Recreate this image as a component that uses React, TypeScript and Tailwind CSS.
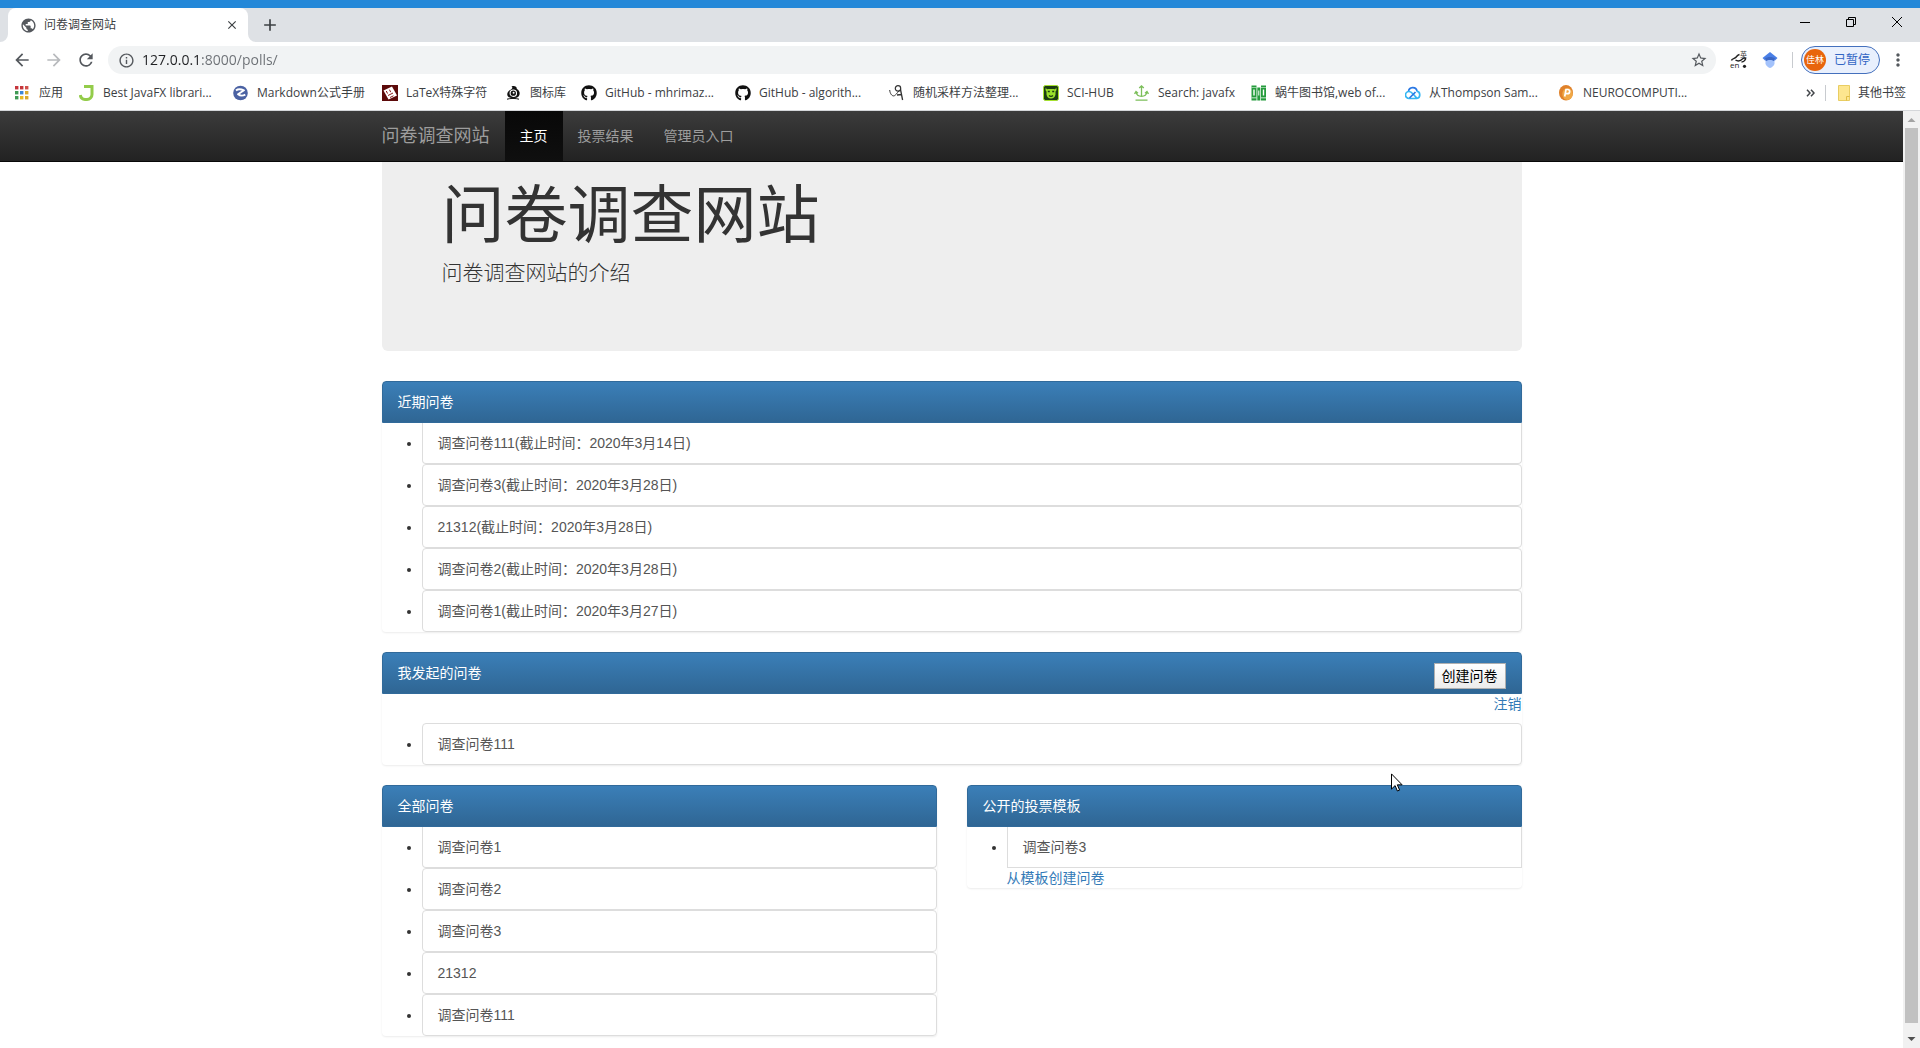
import type { ReactNode } from 'react';
import { FaGithub } from 'react-icons/fa';
import { MdArrowBack, MdArrowForward, MdRefresh, MdPublic, MdInfoOutline, MdStarBorder, MdMoreVert, MdClose, MdAdd } from 'react-icons/md';

type Bookmark = { label: string; width: string; icon: ReactNode };

const appColors = ['#c5353b', '#c5353b', '#d0504a', '#3f9a54', '#3b86d6', '#d9a92c', '#3f9a54', '#e8b923', '#d9a92c'];

const bookmarks: Bookmark[] = [
  {
    label: '应用',
    width: 'w-[64px]',
    icon: (
      <svg viewBox="0 0 16 16" className="size-4 shrink-0">
        {appColors.map((c, i) => (
          <rect key={i} x={(i % 3) * 5} y={1 + Math.floor(i / 3) * 5} width="3.4" height="3.4" fill={c} />
        ))}
      </svg>
    ),
  },
  {
    label: 'Best JavaFX librari...',
    width: 'w-[154px]',
    icon: (
      <svg viewBox="0 0 16 16" className="size-4 shrink-0">
        <path d="M5 1.500h8v8a5 5 0 0 1-5 5H6A5 5 0 0 1 1.300 10" fill="none" stroke="#93cc4a" strokeWidth="3" />
      </svg>
    ),
  },
  {
    label: 'Markdown公式手册',
    width: 'w-[149px]',
    icon: (
      <svg viewBox="0 0 16 16" className="size-4 shrink-0">
        <circle cx="7.500" cy="8" r="7.300" fill="#4b62a3" />
        <path d="M3 5.500c2-1.700 5.500-1.200 8-.2L5 9.300c2 1.500 4.200 2 7.300.3" fill="none" stroke="#fff" strokeWidth="1.900" strokeLinejoin="round" />
      </svg>
    ),
  },
  {
    label: 'LaTeX特殊字符',
    width: 'w-[124px]',
    icon: (
      <svg viewBox="0 0 16 16" className="size-4 shrink-0">
        <rect width="16" height="16" fill="#5c0a0a" />
        <path d="m1.500 5.500 8.500-4 5 9-8.500 4Z" fill="#fff" />
        <path d="m4.300 6 1.200 2.500M7.500 4.700l1.200 2.500M6 10.500l5-2.500m-3 4.500 3.500-1.700" stroke="#8d1919" />
      </svg>
    ),
  },
  {
    label: '图标库',
    width: 'w-[75px]',
    icon: (
      <svg viewBox="0 0 16 16" className="size-4 shrink-0">
        <path d="M5.500 1.500C8.500.500 11 1.500 10.800 4c3 1.500 3.500 4.500 2.200 7-2 2.700-8.500 3-11 .5C.3 9.500 1.500 6 5 4.500 6.500 3.500 7 2.500 5.500 1.500Z" fill="#111" />
        <path d="M1 14.200c3-1 9-1 12 0" stroke="#111" strokeWidth="1" fill="none" />
        <circle cx="7.300" cy="8.200" r="3.200" fill="none" stroke="#fff" strokeWidth="1.100" />
        <circle cx="7.600" cy="7.800" r="1" fill="#fff" />
      </svg>
    ),
  },
  { label: 'GitHub - mhrimaz...', width: 'w-[154px]', icon: <FaGithub size={16} className="shrink-0 text-[#111]" /> },
  { label: 'GitHub - algorith...', width: 'w-[154px]', icon: <FaGithub size={16} className="shrink-0 text-[#111]" /> },
  {
    label: '随机采样方法整理...',
    width: 'w-[154px]',
    icon: (
      <svg viewBox="0 0 16 16" className="size-4 shrink-0" fill="none" stroke="#333">
        <path d="M.7 5c.3 4.500 3.500 7.500 5.600 5C8 9 9 6 11.500 5" strokeWidth="1" />
        <circle cx="9" cy="3.400" r="2.700" strokeWidth="1.200" />
        <path d="M11.500 4.500 13.600 15M8 10l4.500-.5" strokeWidth="1.300" />
      </svg>
    ),
  },
  {
    label: 'SCI-HUB',
    width: 'w-[91px]',
    icon: (
      <svg viewBox="0 0 16 16" className="size-4 shrink-0">
        <rect x=".5" y=".5" width="15" height="15" rx="2" fill="#1d3d12" stroke="#a6e22e" />
        <path d="M3 2.500c0 1.500 1 2 2 1.500h6c1 .5 2 0 2-1.500 1 2 .5 3-.5 4v3c-.5 2.500-2 4-4.500 4s-4-1.500-4.500-4v-3c-1-1-1.500-2-.5-4Z" fill="#9be02a" />
        <path d="M4.800 6.500h2M9.200 6.500h2M6 10.500c1 .8 3 .8 4 0" stroke="#1d3d12" strokeWidth="1.300" fill="none" />
      </svg>
    ),
  },
  {
    label: 'Search: javafx',
    width: 'w-[117px]',
    icon: (
      <svg viewBox="0 0 16 16" className="size-4 shrink-0" fill="none" stroke="#7cbf5a" strokeWidth="1.300">
        <path d="M7.500.8v10.500M5.200 3 7.500.9 9.800 3M2 7c.5 3 2.500 4.300 5.500 4.300S12.500 10 13 7M.5 8.800 2 6.500l2 1.800M14.500 8.800 13 6.500l-2 1.800M1.500 15.200h12" />
      </svg>
    ),
  },
  {
    label: '蜗牛图书馆,web of...',
    width: 'w-[154px]',
    icon: (
      <svg viewBox="0 0 16 16" className="size-4 shrink-0">
        <path d="M.5.5h5v15h-5zM6.300 2.500h3v13h-3zM10 .5h5v15h-5z" fill="#259b3c" />
        <path d="M2.300 4.500h1.400v6H2.300zM7.300 5.500h1v5h-1zM11.800 4.500h1.400v6h-1.400zM.5 2.200h5v.6h-5zM.5 12.500h5v.8h-5zM10 2.200h5v.6h-5zM10 12.500h5v.8h-5z" fill="#fff" />
      </svg>
    ),
  },
  {
    label: '从Thompson Sam...',
    width: 'w-[154px]',
    icon: (
      <svg viewBox="0 0 16 16" className="size-4 shrink-0" fill="none" strokeWidth="1.700">
        <path d="M3.500 6.500A4.300 4.300 0 0 1 12 6" stroke="#2a78e4" />
        <path d="M11.500 6.200a3.700 3.700 0 0 1 .3 7.300H4a3.500 3.500 0 0 1 0-7c2.500 0 3.500 2 5 3.500s2 2.500 3 3.500" stroke="#35b6f2" />
        <path d="m4.500 13 6-6" stroke="#2a78e4" />
      </svg>
    ),
  },
  {
    label: 'NEUROCOMPUTI...',
    width: 'w-[154px]',
    icon: (
      <svg viewBox="0 0 16 16" className="size-4 shrink-0">
        <ellipse cx="7" cy="7.800" rx="7" ry="7.700" fill="#e0812a" />
        <ellipse cx="8.500" cy="9" rx="5.200" ry="6" fill="#f0a846" />
        <path d="M5.700 11.500 7 4.500h1.900c2.600 0 2.300 4.200-.5 4.200H6.700" fill="none" stroke="#fff" strokeWidth="1.700" />
      </svg>
    ),
  },
];

const recentPolls = [
  '调查问卷111(截止时间：2020年3月14日)',
  '调查问卷3(截止时间：2020年3月28日)',
  '21312(截止时间：2020年3月28日)',
  '调查问卷2(截止时间：2020年3月28日)',
  '调查问卷1(截止时间：2020年3月27日)',
];

const allPolls = ['调查问卷1', '调查问卷2', '调查问卷3', '21312', '调查问卷111'];

function TabStrip() {
  return (
    <div className="flex h-[34px] items-stretch bg-[#dee1e5] pl-2">
      <div className="relative flex w-60 items-center rounded-t-lg bg-white pr-2 pl-3">
        {/* Curved feet of the active tab */}
        <svg viewBox="0 0 8 8" className="absolute bottom-0 -left-2 size-2">
          <path d="M8 0v8H0a8 8 0 0 0 8-8Z" fill="#fff" />
        </svg>
        <svg viewBox="0 0 8 8" className="absolute -right-2 bottom-0 size-2">
          <path d="M0 0v8h8a8 8 0 0 1-8-8Z" fill="#fff" />
        </svg>
        <MdPublic size={17} className="text-[#54585d]" />
        <span className="ml-[7px] flex-1 text-xs text-[#3c4043]">问卷调查网站</span>
        <button aria-label="关闭标签页" className="flex size-4 items-center justify-center text-[#3c4043]">
          <MdClose size={14} />
        </button>
      </div>
      <button aria-label="新标签页" className="ml-3 flex w-5 items-center justify-center text-[#3c4043]">
        <MdAdd size={20} />
      </button>
      <div className="ml-auto flex h-7 items-center gap-9 pr-[18px]">
        <button aria-label="最小化">
          <svg viewBox="0 0 10 10" className="size-2.5" stroke="#000">
            <path d="M0 5.500h10" />
          </svg>
        </button>
        <button aria-label="还原">
          <svg viewBox="0 0 10 10" className="size-2.5" fill="none" stroke="#000">
            <path d="M.5 2.500h7v7h-7zM2.500 2.500v-2h7v7h-2" />
          </svg>
        </button>
        <button aria-label="关闭">
          <svg viewBox="0 0 10 10" className="size-2.5" stroke="#000">
            <path d="m0 0 10 10M10 0 0 10" />
          </svg>
        </button>
      </div>
    </div>
  );
}

function Toolbar() {
  return (
    <div className="flex h-9 items-center bg-white pr-3 pl-3">
      <div className="flex items-center gap-3 text-[#54585d]">
        <button aria-label="后退"><MdArrowBack size={20} /></button>
        <button aria-label="前进" className="text-[#b8babd]"><MdArrowForward size={20} /></button>
        <button aria-label="重新加载"><MdRefresh size={20} /></button>
      </div>
      <div className="ml-3 flex h-7 flex-1 items-center rounded-full bg-[#f1f3f4] pr-2 pl-2.5">
        <MdInfoOutline size={17} className="text-[#54585d]" />
        <input
          aria-label="地址"
          defaultValue="127.0.0.1:8000/polls/"
          className="ml-[7px] flex-1 bg-[linear-gradient(to_right,#202124_59px,#6b6f74_59px)] bg-clip-text text-sm text-transparent outline-none"
        />
        <button aria-label="收藏" className="text-[#54585d]"><MdStarBorder size={18} /></button>
      </div>
      <div className="ml-3.5 flex items-center gap-3.5">
        <button aria-label="翻译">
          <svg viewBox="0 0 18 18" className="size-[18px] overflow-visible" fill="none" stroke="#222">
            <path d="M1.500 9.500C2 7.500 4.500 8 6 6.300S7.500 4 9.500 3.500M5.500 9c3 2 5.500.500 7.500-1.500 1.500-1.200 3.500-.5 2 1.500-.8 1.500-2 2-3.500 2" strokeWidth="1.500" />
            <text x="0" y="17" fontSize="8" fill="#222" stroke="none">en</text>
            <text x="10" y="6" fontSize="7" fill="#444" stroke="none">英</text>
            <circle cx="14.500" cy="15.300" r="1.600" fill="#222" stroke="none" />
          </svg>
        </button>
        <button aria-label="学术搜索">
          <svg viewBox="0 0 16 18" className="h-[18px] w-4">
            <path d="m8 1 7.500 6L13 9.500H3L.5 7Z" fill="#4a7fe6" />
            <path d="M3.500 8.500C5 6.500 11 6.500 12.500 8.500v4.500c-1 2-2.500 3.500-4.500 4-2-.5-3.500-2-4.500-4Z" fill="#a3c2fb" />
            <path d="M3 7.500c2-2 8-2 10 0L12 10c-2-1.500-6-1.500-8 0Z" fill="#3b67c4" />
          </svg>
        </button>
      </div>
      <div className="ml-3.5 h-4 w-px bg-[#c8cbcf]" />
      <button className="ml-2 flex h-7 items-center rounded-full border border-[#4470bd] bg-[#e9f0fd] pr-[9px] pl-0.5">
        <span className="flex size-[22px] items-center justify-center rounded-full bg-[#e8650c] text-[9px] text-white">佳林</span>
        <span className="ml-2 text-xs text-[#3265c4]">已暂停</span>
      </button>
      <button aria-label="菜单" className="ml-2 text-[#54585d]"><MdMoreVert size={20} /></button>
    </div>
  );
}

function BookmarksBar() {
  return (
    <div className="flex h-[33px] items-center border-b border-[#d5d7da] bg-white pr-3.5 pb-0.5 pl-[15px] text-xs text-[#3c4043]">
      {bookmarks.map((b) => (
        <a key={b.label} href="#" className={`flex shrink-0 items-center gap-2 whitespace-nowrap ${b.width}`}>
          {b.icon}
          {b.label}
        </a>
      ))}
      <div className="ml-auto flex items-center">
        <button aria-label="更多书签">
          <svg viewBox="0 0 9 8" className="h-2 w-[9px]" fill="none" stroke="#44474b" strokeWidth="1.500">
            <path d="m1 .7 3 3.300-3 3.300M5 .7 8 4 5 7.300" />
          </svg>
        </button>
        <div className="ml-2.5 h-4 w-px bg-[#c8cbcf]" />
        <a href="#" className="ml-3 flex items-center gap-2 whitespace-nowrap">
          <svg viewBox="0 0 12 16" className="h-4 w-3">
            <path d="M.5.5h11v15H.5z" fill="#fde68f" stroke="#e9cd62" />
            <path d="M8.500 15.500v-4h3" fill="none" stroke="#e0bd45" />
          </svg>
          其他书签
        </a>
      </div>
    </div>
  );
}

function Navbar() {
  return (
    <nav className="border-b border-[#080808] bg-linear-to-b from-[#3c3c3c] to-[#222]">
      <div className="mx-auto flex h-[50px] w-full max-w-[1140px] items-stretch text-sm text-[#9d9d9d]">
        <a href="#" className="flex items-center pr-[15px] text-lg">问卷调查网站</a>
        <a href="#" className="flex items-center bg-linear-to-b from-[#080808] to-[#0f0f0f] px-[15px] text-white">主页</a>
        <a href="#" className="flex items-center px-[15px]">投票结果</a>
        <a href="#" className="flex items-center px-[15px]">管理员入口</a>
      </div>
    </nav>
  );
}

function Panel({ title, action, children }: { title: string; action?: ReactNode; children: ReactNode }) {
  return (
    <section className="mb-5 rounded bg-white shadow-[0_1px_2px_rgba(0,0,0,0.08)]">
      <div className="flex h-[42px] items-center justify-between rounded-t border border-[#316a9a] bg-linear-to-b from-[#3b7fb8] to-[#2f6694] px-[15px] text-white">
        <h3>{title}</h3>
        {action}
      </div>
      {children}
    </section>
  );
}

function PollList({ items }: { items: string[] }) {
  return (
    <ul className="list-disc pl-10">
      {items.map((item, i) => (
        <li key={item}>
          <a
            href="#"
            className={`block border border-[#ddd] px-[15px] py-2.5 text-[#555] ${i === 0 ? 'rounded-b border-t-0' : 'rounded'}`}
          >
            {item}
          </a>
        </li>
      ))}
    </ul>
  );
}

function Scrollbar() {
  return (
    <div className="flex w-[17px] shrink-0 flex-col items-center bg-[#f1f1f1]">
      <svg viewBox="0 0 17 17" className="size-[17px] shrink-0">
        <path d="m8.500 7 4 4h-8z" fill="#a3a3a3" />
      </svg>
      <div className="w-[13px] flex-1 bg-[#c1c1c1]" />
      <svg viewBox="0 0 17 25" className="h-[25px] w-[17px] shrink-0">
        <path d="m8.500 18 4-4h-8z" fill="#505050" />
      </svg>
    </div>
  );
}

export default function App() {
  return (
    <div className="flex h-screen flex-col overflow-hidden bg-white font-['Open_Sans','Noto_Sans_CJK_SC',sans-serif]">
      <div className="h-2 shrink-0 bg-[#2488d8]" />
      <header className="shrink-0">
        <TabStrip />
        <Toolbar />
        <BookmarksBar />
      </header>

      <div className="flex min-h-0 flex-1 font-['Liberation_Sans','Noto_Sans_CJK_SC',sans-serif]">
        <div className="min-w-0 flex-1 overflow-hidden">
          <Navbar />
          <main className="mx-auto w-full max-w-[1140px] text-sm leading-5 text-[#333]">
            <div className="mb-[30px] rounded-b-md bg-[#eee] px-[60px] pt-[19px] pb-[63px]">
              <h1 className="mb-2 text-[63px] leading-[69px]">问卷调查网站</h1>
              <p className="text-[21px] leading-[30px] font-light">问卷调查网站的介绍</p>
            </div>

            <Panel title="近期问卷">
              <PollList items={recentPolls} />
            </Panel>

            <Panel
              title="我发起的问卷"
              action={
                <button className="mt-1.5 h-[26px] w-[72px] border border-[#b0b0b0] bg-linear-to-b from-white to-[#ececec] text-sm leading-5 text-black">
                  创建问卷
                </button>
              }
            >
              <div className="mb-[9px] text-right">
                <a href="#" className="text-[#337ab7]">注销</a>
              </div>
              <ul className="list-disc pl-10">
                <li>
                  <a href="#" className="block rounded border border-[#ddd] px-[15px] py-2.5 text-[#555]">调查问卷111</a>
                </li>
              </ul>
            </Panel>

            <div className="relative grid grid-cols-2 items-start gap-[30px]">
              <Panel title="全部问卷">
                <PollList items={allPolls} />
              </Panel>
              <Panel title="公开的投票模板">
                <ul className="list-disc pl-10">
                  <li>
                    <a href="#" className="block border border-t-0 border-[#ddd] px-[15px] py-2.5 text-[#555]">调查问卷3</a>
                    <a href="#" className="text-[#337ab7]">从模板创建问卷</a>
                  </li>
                </ul>
              </Panel>

              {/* Mouse pointer */}
              <svg viewBox="0 0 12 19" className="pointer-events-none absolute -top-3 right-[119px] h-[19px] w-3">
                <path d="M.5.900v15.200l3.600-3.500 2.300 5.400 2.200-.9-2.300-5.300h4.800Z" fill="#fff" stroke="#000" />
              </svg>
            </div>
          </main>
        </div>
        <Scrollbar />
      </div>
    </div>
  );
}
